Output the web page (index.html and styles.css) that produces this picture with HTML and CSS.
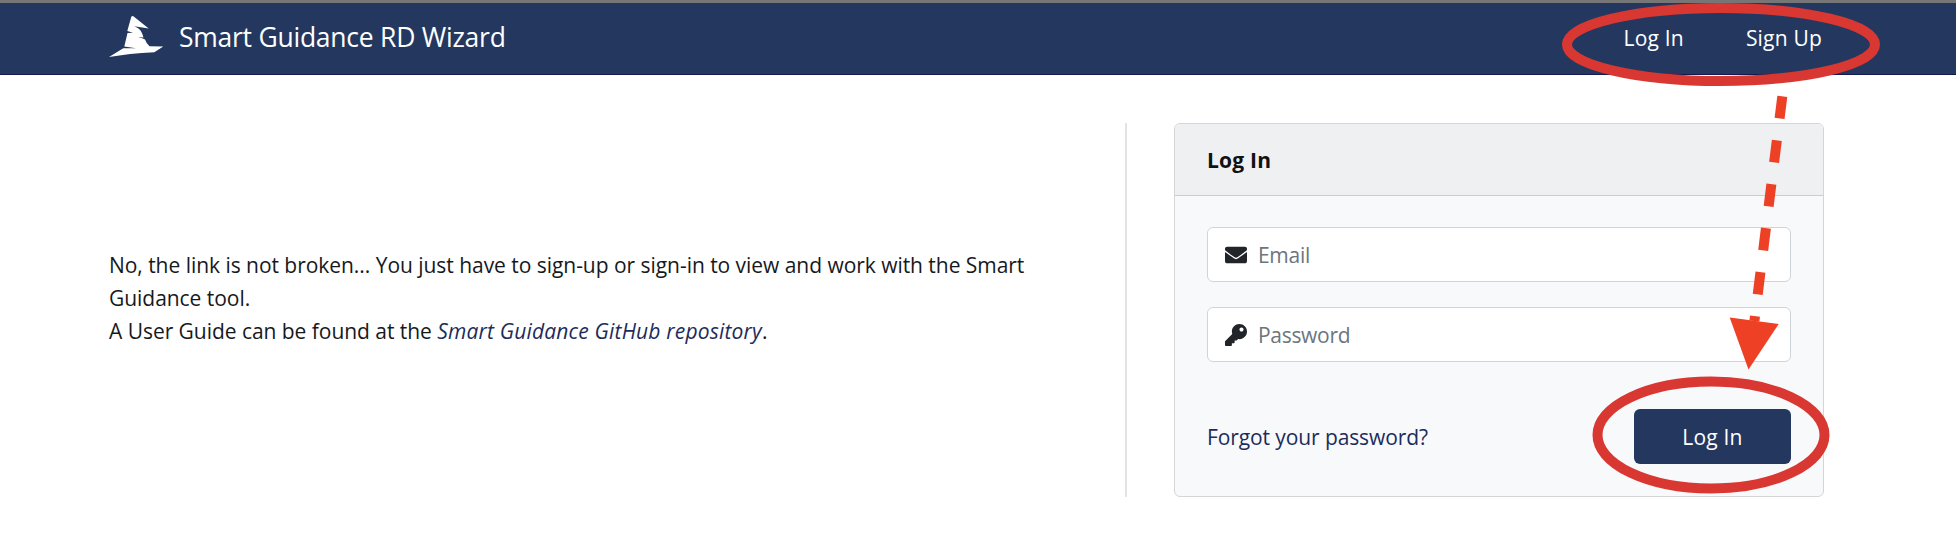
FILE: index.html
```html
<!DOCTYPE html>
<html lang="en">
<head>
<meta charset="utf-8">
<title>Smart Guidance RD Wizard</title>
<link rel="stylesheet" href="styles.css">
</head>
<body>
<header class="navbar">
  <a class="brand">
    <svg class="hat" width="56" height="42" viewBox="0 0 56 42"><path fill="#fff" d="M22.300 .8Q23.500-.5 25 .7L39.700 12.600 25.300 10.300Q30 12 31.700 14.700 33.800 18 34.500 21.500L29 21Q34 22 36 23.500 37.500 28 40.500 30.300L54.300 30.500 45.300 36.200Q20 37.500 0 41L14.300 32.200 27 32.300 15.300 30.500 18.500 17 24 16.700 18.300 15Z"/></svg>
    <span class="brand-name">Smart Guidance RD Wizard</span>
  </a>
  <nav class="links"><a class="nav-login">Log In</a><a class="nav-signup">Sign Up</a></nav>
</header>
<main class="content">
  <section class="message">
    <p>No, the link is not broken... You just have to sign-up or sign-in to view and work with the Smart<br>Guidance tool.<br>A User Guide can be found at the <a class="repo">Smart Guidance GitHub repository</a>.</p>
  </section>
  <section class="card">
    <h1 class="card-header">Log In</h1>
    <div class="card-body">
      <div class="field">
        <svg width="22" height="22" viewBox="0 0 512 512"><path fill="#212529" d="M502.300 190.800c3.900-3.100 9.700-.2 9.700 4.700V400c0 26.500-21.500 48-48 48H48c-26.500 0-48-21.500-48-48V195.600c0-5 5.700-7.800 9.700-4.700 22.400 17.400 52.100 39.500 154.100 113.600 21.100 15.400 56.700 47.800 92.200 47.600 35.700.3 72-32.800 92.300-47.600 102-74.100 131.600-96.300 154-113.700zM256 320c23.200.4 56.600-29.200 73.400-41.400 132.700-96.300 142.800-104.700 173.400-128.700 5.800-4.500 9.200-11.500 9.200-18.900v-19c0-26.500-21.500-48-48-48H48c-26.500 0-48 21.500-48 48v19c0 7.400 3.400 14.300 9.200 18.900 30.600 23.900 40.700 32.400 173.400 128.700 16.800 12.200 50.200 41.800 73.400 41.400z"/></svg>
        <span class="placeholder">Email</span>
      </div>
      <div class="field">
        <svg width="22" height="22" viewBox="0 0 512 512"><path fill="#212529" d="M512 176.001C512 273.203 433.202 352 336 352c-11.220 0-22.190-1.062-32.827-3.069l-24.012 27.014A23.999 23.999 0 0 1 261.223 384H224v40c0 13.255-10.745 24-24 24h-40v40c0 13.255-10.745 24-24 24H24c-13.255 0-24-10.745-24-24v-78.059c0-6.365 2.529-12.470 7.029-16.971l161.802-161.802C163.108 213.814 160 195.271 160 176 160 78.798 238.797.001 335.999 0 433.488-.001 512 78.511 512 176.001zM336 128c0 26.510 21.490 48 48 48s48-21.490 48-48-21.490-48-48-48-48 21.490-48 48z"/></svg>
        <span class="placeholder">Password</span>
      </div>
      <div class="actions"><a class="forgot">Forgot your password?</a><button class="submit">Log In</button></div>
    </div>
  </section>
</main>
<svg class="annotations" width="1956" height="536" viewBox="0 0 1956 536" fill="none">
  <g stroke="#d93731" stroke-width="10"><ellipse cx="1721" cy="44.500" rx="154" ry="36.500"/><ellipse cx="1711" cy="435" rx="113.500" ry="53.500"/></g>
  <path d="M1782.300 96.300L1754.400 321" stroke="#ed4024" stroke-width="10" stroke-dasharray="22.300 22"/>
  <path d="M1729.700 317.500L1778.700 324 1748.500 369.500Z" fill="#ed4024"/>
</svg>
</body>
</html>
```
FILE: styles.css
```css
* { box-sizing: border-box; }
body {
  margin: 0;
  height: 536px;
  overflow: hidden;
  position: relative;
  background: #fff;
  color: #16191c;
  font: 21px/33px "Open Sans", "Noto Sans", sans-serif;
}
.navbar {
  height: 75px;
  padding: 0 134px 0 109px;
  border-top: 3px solid #767676;
  border-bottom: 1px solid #15184f;
  background: #24385f;
  color: #fff;
  display: flex;
  align-items: center;
  justify-content: space-between;
}
.brand { display: flex; align-items: center; gap: 14px; }
.hat { display: block; margin-bottom: 3px; }
.brand-name { font-size: 26.5px; letter-spacing: -0.25px; padding-bottom: 3px; }
.links { display: flex; gap: 62px; letter-spacing: 0.2px; }
.content {
  display: flex;
  padding: 48px 132px 0 109px;
}
.message {
  width: 1018px;
  height: 374px;
  border-right: 2px solid #e2e3e4;
  display: flex;
  align-items: center;
}
.message p {
  margin: 0;
  padding-bottom: 24px;
  white-space: nowrap;
  letter-spacing: -0.04px;
}
.repo { color: #1c2c5b; font-style: italic; letter-spacing: 0.18px; }
.card {
  width: 650px;
  height: 374px;
  margin-left: 47px;
  border: 1px solid #d3d5d7;
  border-radius: 6px;
  background: #f8f9fb;
  overflow: hidden;
}
.card-header {
  margin: 0;
  height: 72px;
  padding: 20px 32px;
  border-bottom: 1px solid #cbcdcf;
  background: #eff0f2;
  color: #101214;
  font-size: 21px;
  font-weight: 700;
  letter-spacing: 0.2px;
}
.card-body { padding: 31px 32px; display: flex; flex-direction: column; gap: 25px; }
.field {
  height: 55px;
  padding: 0 17px;
  border: 1px solid #ced4da;
  border-radius: 6px;
  background: #fff;
  color: #6c757d;
  display: flex;
  align-items: center;
  gap: 11px;
}
.placeholder { padding-top: 2px; letter-spacing: -0.3px; }
.actions { margin-top: 22px; display: flex; align-items: center; justify-content: space-between; }
.forgot { color: #1c2c5b; padding-top: 2px; letter-spacing: -0.1px; }
.submit {
  width: 157px;
  height: 55px;
  padding: 2px 0 0;
  border: 0;
  border-radius: 6px;
  background: #24385f;
  color: #fff;
  font: inherit;
  letter-spacing: 0.2px;
}
.annotations { position: absolute; left: 0; top: 0; pointer-events: none; }
```
